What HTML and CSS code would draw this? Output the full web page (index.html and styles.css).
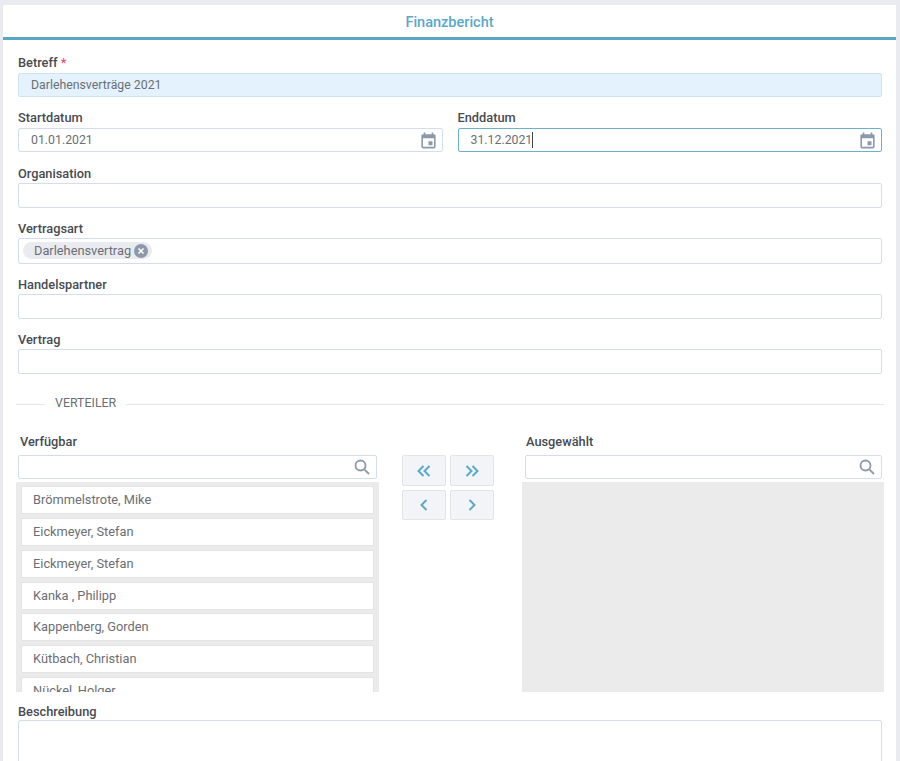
FILE: index.html
```html
<!DOCTYPE html>
<html lang="de">

<head>
   <meta charset="UTF-8">
   <meta name="viewport" content="width=device-width, initial-scale=1.0">
   <title>Finanzbericht</title>
   <link rel="stylesheet" href="styles.css">
</head>

<body>
   <div class="card">
      <h1 class="card-title">Finanzbericht</h1>

      <div class="form">
         <div class="field">
            <label>Betreff <span class="required">*</span></label>
            <div class="input input-filled">Darlehensverträge 2021</div>
         </div>

         <div class="field-row">
            <div class="field">
               <label>Startdatum</label>
               <div class="input input-date">
                  <span>01.01.2021</span>
                  <svg class="calendar" viewBox="0 0 24 24"><path d="M19 3h-1V1h-2v2H8V1H6v2H5c-1.1 0-2 .9-2 2v14c0 1.1.9 2 2 2h14c1.1 0 2-.9 2-2V5c0-1.1-.9-2-2-2zm0 16H5V8h14v11zm-7-7h5v5h-5z" transform="translate(0 1)"/></svg>
               </div>
            </div>
            <div class="field">
               <label>Enddatum</label>
               <div class="input input-date input-focus">
                  <span class="caret">31.12.2021</span>
                  <svg class="calendar" viewBox="0 0 24 24"><path d="M19 3h-1V1h-2v2H8V1H6v2H5c-1.1 0-2 .9-2 2v14c0 1.1.9 2 2 2h14c1.1 0 2-.9 2-2V5c0-1.1-.9-2-2-2zm0 16H5V8h14v11zm-7-7h5v5h-5z" transform="translate(0 1)"/></svg>
               </div>
            </div>
         </div>

         <div class="field">
            <label>Organisation</label>
            <div class="input input-tall"></div>
         </div>

         <div class="field">
            <label>Vertragsart</label>
            <div class="input input-tall input-tags">
               <span class="tag">Darlehensvertrag
                  <svg class="tag-close" viewBox="0 0 14 14">
                     <circle cx="7" cy="7" r="7" />
                     <path d="M4.5 4.5l5 5M9.5 4.5l-5 5" />
                  </svg>
               </span>
            </div>
         </div>

         <div class="field">
            <label>Handelspartner</label>
            <div class="input input-tall"></div>
         </div>

         <div class="field">
            <label>Vertrag</label>
            <div class="input input-tall"></div>
         </div>
      </div>

      <div class="divider"><span>VERTEILER</span></div>

      <div class="picker">
         <div class="picker-col">
            <div class="picker-label">Verfügbar</div>
            <div class="search">
               <svg class="search-icon" viewBox="0 0 16 16"><circle cx="6.5" cy="6.5" r="5" /><path d="M10.3 10.3l4.7 4.7" /></svg>
            </div>
            <div class="picker-list">
               <div class="picker-item">Brömmelstrote, Mike</div>
               <div class="picker-item">Eickmeyer, Stefan</div>
               <div class="picker-item">Eickmeyer, Stefan</div>
               <div class="picker-item">Kanka , Philipp</div>
               <div class="picker-item">Kappenberg, Gorden</div>
               <div class="picker-item">Kütbach, Christian</div>
               <div class="picker-item">Nückel, Holger</div>
            </div>
         </div>

         <div class="picker-buttons">
            <button><svg viewBox="0 0 14 12"><path d="M6.5 1L1.5 6l5 5M12.5 1l-5 5 5 5" /></svg></button>
            <button><svg viewBox="0 0 14 12"><path d="M1.5 1l5 5-5 5M7.5 1l5 5-5 5" /></svg></button>
            <button><svg viewBox="0 0 14 12"><path d="M9.5 1L4.5 6l5 5" /></svg></button>
            <button><svg viewBox="0 0 14 12"><path d="M4.5 1l5 5-5 5" /></svg></button>
         </div>

         <div class="picker-col picker-col-right">
            <div class="picker-label">Ausgewählt</div>
            <div class="search">
               <svg class="search-icon" viewBox="0 0 16 16"><circle cx="6.5" cy="6.5" r="5" /><path d="M10.3 10.3l4.7 4.7" /></svg>
            </div>
            <div class="picker-list"></div>
         </div>
      </div>

      <div class="form form-bottom">
         <div class="field">
            <label>Beschreibung</label>
            <div class="input textarea"></div>
         </div>
      </div>
   </div>
</body>

</html>
```

FILE: styles.css
```css
html,
body {
   height: 100%;
}

body {
   margin: 0;
   padding: 5px 4px 0 3px;
   box-sizing: border-box;
   overflow: hidden;
   background-color: #e9ebf0;
   font-family: Roboto, "Liberation Sans", sans-serif;
   font-size: 12.8px;
   color: #6b6f75;
}

.card {
   height: 100%;
   background-color: #fff;
   overflow: hidden;
}

.card-title {
   margin: 0;
   height: 32px;
   line-height: 36px;
   text-align: center;
   font-size: 14.5px;
   font-weight: 500;
   color: #5aa9c9;
   border-bottom: 3px solid #58a8c4;
}

.form {
   padding: 13px 14px 0 15px;
   display: flex;
   flex-direction: column;
   gap: 11px;
}

.form-bottom {
   padding-top: 10px;
}

.field {
   flex: 1;
}

.field label,
.picker-label {
   display: block;
   height: 18px;
   line-height: 20px;
   font-size: 12.8px;
   font-weight: 500;
   color: #484b51;
}

.required {
   color: #f0506e;
}

.field-row {
   display: flex;
   gap: 15px;
   margin-bottom: 1px;
}

.input {
   box-sizing: border-box;
   height: 24px;
   line-height: 22px;
   padding: 0 12px;
   margin-top: 2px;
   border: 1px solid #d3deec;
   border-radius: 2px;
   background-color: #fff;
   font-size: 12.3px;
}

.input-filled {
   background-color: #e3f2fd;
   border-color: #cfe2ee;
}

.input-date {
   display: flex;
   justify-content: space-between;
   align-items: center;
   padding-right: 4px;
}

.input-focus {
   border-color: #6db1c9;
}

.caret {
   border-right: 1px solid #44474d;
   height: 16px;
   line-height: 16px;
}

.calendar {
   width: 19px;
   height: 19px;
   fill: #8d98ab;
}

.input-tall {
   height: 25.33px;
   line-height: 23px;
   margin-top: 1px;
}

.input-tags {
   padding: 0 4px;
   display: flex;
   align-items: center;
   font-size: 12.8px;
}

.tag {
   display: inline-flex;
   align-items: center;
   gap: 3px;
   height: 17px;
   padding: 0 4px 0 11px;
   border-radius: 9px;
   background-color: #e9ebf0;
}

.tag-close {
   width: 14px;
   height: 14px;
}

.tag-close circle {
   fill: #8d98ab;
}

.tag-close path {
   stroke: #fff;
   stroke-width: 1.5;
}

.divider {
   display: flex;
   align-items: center;
   gap: 10px;
   margin: 21px 12px 0 13px;
   height: 18px;
   font-size: 12.4px;
}

.divider span {
   padding-bottom: 3px;
}

.divider::before {
   content: "";
   width: 29px;
   border-top: 1px solid #e6e6e6;
}

.divider::after {
   content: "";
   flex: 1;
   border-top: 1px solid #e6e6e6;
}

.picker {
   display: flex;
   padding: 0 12px 0 13px;
   margin-top: 19px;
}

.picker-col {
   width: 363px;
}

.picker-col-right {
   width: 362px;
}

.picker-label {
   padding-left: 4px;
   margin-bottom: 5px;
}

.search {
   box-sizing: border-box;
   display: flex;
   justify-content: flex-end;
   align-items: center;
   width: 359px;
   height: 24px;
   margin: 0 2px;
   padding-right: 6px;
   border: 1px solid #d3deec;
   border-radius: 2px;
}

.picker-col-right .search {
   width: 357px;
   margin: 0 2px 0 3px;
}

.search-icon {
   width: 16px;
   height: 16px;
   fill: none;
   stroke: #8d98ab;
   stroke-width: 1.8;
}

.picker-list {
   box-sizing: border-box;
   height: 210px;
   margin-top: 3px;
   padding: 4px 5px;
   overflow: hidden;
   background-color: #ebebeb;
}

.picker-item {
   box-sizing: border-box;
   height: 28px;
   line-height: 26px;
   margin-bottom: 3.75px;
   padding-left: 11px;
   border: 1px solid #e4e4e4;
   background-color: #fff;
}

.picker-buttons {
   display: grid;
   grid-template-columns: 44px 44px;
   grid-template-rows: 31px 30px;
   gap: 4px;
   width: 92px;
   margin: 23px 28px 0 23px;
   align-self: flex-start;
}

.picker-buttons button {
   padding: 0;
   display: flex;
   justify-content: center;
   align-items: center;
   background-color: #f3f4f7;
   border: 1px solid #e2e4ea;
   border-radius: 2px;
}

.picker-buttons svg {
   width: 14px;
   height: 12px;
   fill: none;
   stroke: #5aa9c9;
   stroke-width: 2;
}

.textarea {
   height: 80px;
   margin-top: 0;
}
```
